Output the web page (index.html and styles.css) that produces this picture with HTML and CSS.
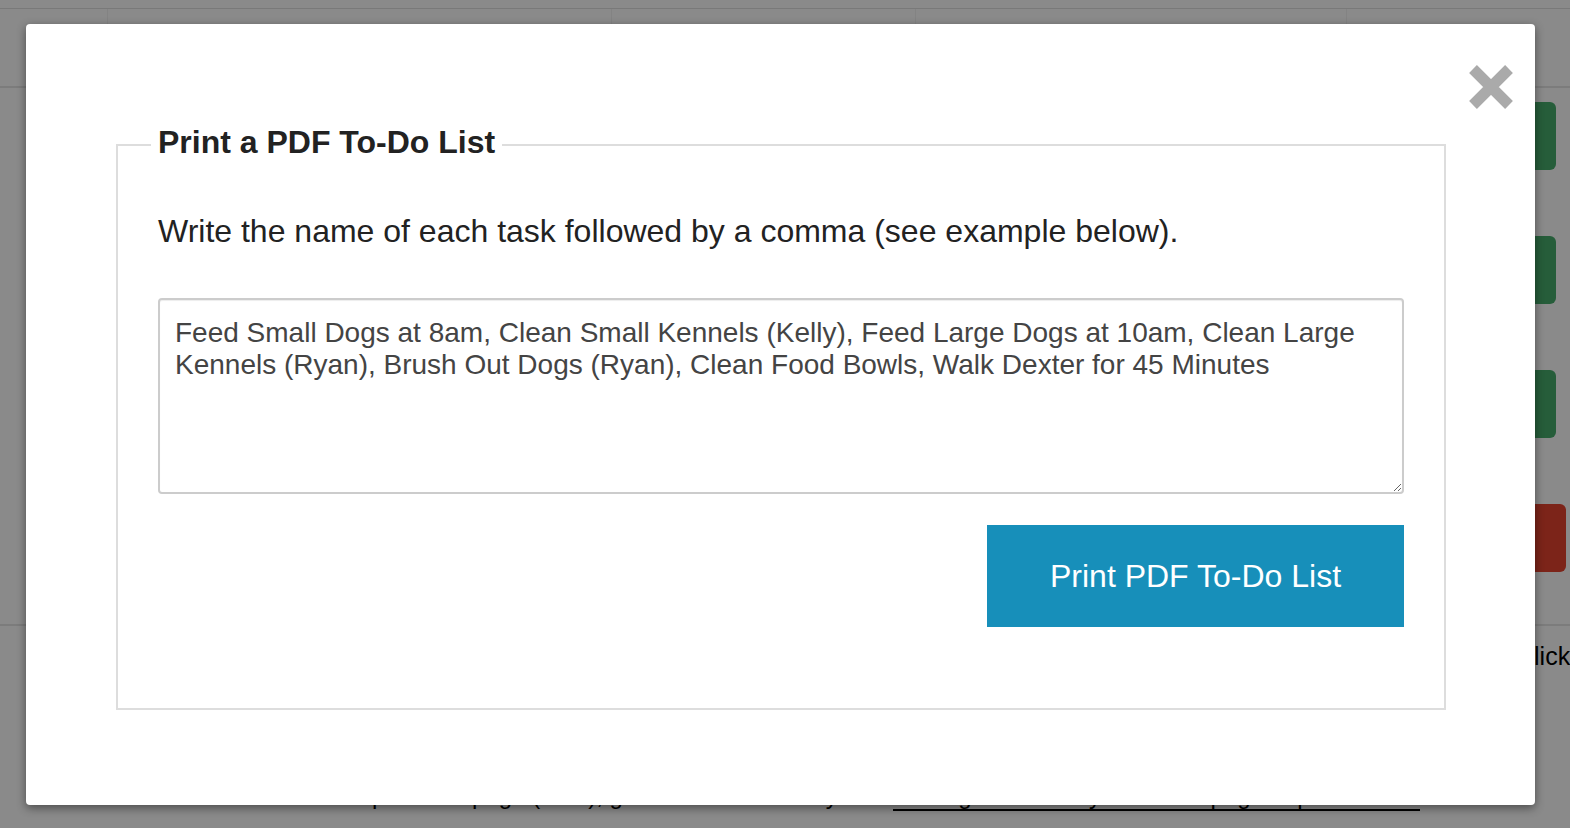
FILE: index.html
```html
<!DOCTYPE html>
<html lang="en">
<head>
<meta charset="utf-8">
<title>Print a PDF To-Do List</title>
<link rel="stylesheet" href="styles.css">
</head>
<body>
<div class="page">
  <div class="topbar"></div>
  <div class="thead">
    <div class="th c1"></div>
    <div class="th c2"></div>
    <div class="th c3"></div>
    <div class="th c4"></div>
    <div class="th c5"></div>
  </div>
  <div class="rows">
    <div class="row"><span class="btn green"></span></div>
    <div class="row"><span class="btn green"></span></div>
    <div class="row"><span class="btn green"></span></div>
    <div class="row"><span class="btn red"></span></div>
  </div>
  <div class="footer-area">
    <p class="click">Click</p>
    <p class="note"><span class="note-text">To print one page (PDF), go to the schedule by</span><a href="#">clicking on the daily schedule page to print the list</a></p>
  </div>
</div>

<div class="overlay"></div>

<div class="modal">
  <button class="close" aria-label="Close">
    <svg viewBox="0 0 44 44" width="44" height="44"><path d="M4 4 L40 40 M40 4 L4 40" stroke="#aaaaaa" stroke-width="11" fill="none"/></svg>
  </button>
  <fieldset class="box">
    <legend>Print a PDF To-Do List</legend>
    <p class="intro">Write the name of each task followed by a comma (see example below).</p>
    <textarea class="tasks">Feed Small Dogs at 8am, Clean Small Kennels (Kelly), Feed Large Dogs at 10am, Clean Large Kennels (Ryan), Brush Out Dogs (Ryan), Clean Food Bowls, Walk Dexter for 45 Minutes</textarea>
    <div class="actions">
      <button class="print">Print PDF To-Do List</button>
    </div>
  </fieldset>
</div>
</body>
</html>
```

FILE: styles.css
```css
* { box-sizing: border-box; }
html, body { margin: 0; padding: 0; }
body {
  width: 1570px;
  height: 828px;
  overflow: hidden;
  background: #ffffff;
  font-family: "Liberation Sans", Arial, Helvetica, sans-serif;
  position: relative;
}

/* background page */
.page { width: 1570px; height: 828px; }
.topbar { height: 9px; border-bottom: 1px solid #e0e0e0; }
.thead {
  height: 79px;
  display: flex;
  border-bottom: 2px solid #e6e6e6;
}
.th { border-right: 1px solid #f2f2f2; height: 16px; }
.c1 { width: 108px; }
.c2 { width: 504px; }
.c3 { width: 304px; }
.c4 { width: 431px; }
.c5 { flex: 1; border-right: none; }
.rows { display: flex; flex-direction: column; }
.row {
  height: 134px;
  display: flex;
  justify-content: flex-end;
  align-items: flex-start;
  padding-top: 14px;
  padding-right: 14px;
}
.row:last-child { height: 136px; border-bottom: 2px solid #e6e6e6; }
.btn { display: block; width: 100px; height: 68px; border-radius: 6px; }
.green { background: #47ad6c; }
.red { background: #e5432f; margin-right: -10px; }
.footer-area { position: relative; height: 200px; }
.click {
  margin: 0;
  padding: 16px 0 0 1516px;
  font-size: 25px;
  color: #000;
  white-space: nowrap;
}
.note {
  display: flex;
  margin: 0;
  padding: 111px 0 0 340px;
  font-size: 24px;
  color: #000;
  white-space: nowrap;
}
.note-text { flex: 0 0 553px; }
.note a { flex: 0 0 auto; color: #000; text-underline-offset: 5px; }

.overlay {
  position: absolute;
  inset: 0;
  background: rgba(0, 0, 0, 0.46);
}

/* modal */
.modal {
  position: absolute;
  left: 26px;
  top: 24px;
  width: 1509px;
  height: 781px;
  background: #ffffff;
  border-radius: 4px;
  box-shadow: 0 3px 10px rgba(0, 0, 0, 0.45);
  padding: 100px 89px 0 90px;
}
.close {
  position: absolute;
  top: 41px;
  right: 22px;
  width: 44px;
  height: 44px;
  padding: 0;
  border: 0;
  background: transparent;
  cursor: pointer;
}
.close svg { display: block; }

.box {
  margin: 0;
  border: 2px solid #dddddd;
  padding: 0 40px 81px 40px;
}
.box legend {
  margin-left: -7px;
  padding: 0 7px 5px 7px;
  font-size: 32px;
  font-weight: bold;
  color: #222222;
  line-height: 36px;
}
.intro {
  margin: 48px 0 0 0;
  font-size: 32px;
  line-height: 36px;
  color: #222222;
}
.tasks {
  display: block;
  width: 100%;
  height: 196px;
  margin-top: 49px;
  padding: 17px 15px;
  border: 2px solid #cccccc;
  border-radius: 4px;
  font-family: "Liberation Sans", Arial, Helvetica, sans-serif;
  font-size: 28px;
  line-height: 32px;
  color: #444444;
  box-shadow: inset 0 1px 1px rgba(0, 0, 0, 0.075);
  resize: both;
}
.actions {
  display: flex;
  justify-content: flex-end;
  margin-top: 31px;
}
.print {
  width: 417px;
  height: 102px;
  border: 0;
  background: #178fba;
  color: #ffffff;
  font-family: "Liberation Sans", Arial, Helvetica, sans-serif;
  font-size: 32px;
  cursor: pointer;
}
```
